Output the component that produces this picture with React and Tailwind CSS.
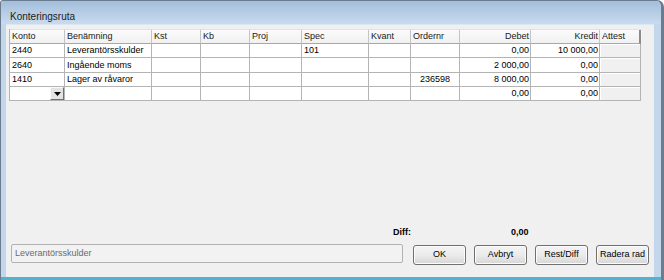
import React from 'react';

const COLS = [
  { name: 'Konto', w: 'w-[55px]' },
  { name: 'Benämning', w: 'w-[87px]' },
  { name: 'Kst', w: 'w-[49px]' },
  { name: 'Kb', w: 'w-[49px]' },
  { name: 'Proj', w: 'w-[52px]' },
  { name: 'Spec', w: 'w-[67px]' },
  { name: 'Kvant', w: 'w-[42px]' },
  { name: 'Ordernr', w: 'w-[49px]', center: true },
  { name: 'Debet', w: 'w-[71px]', right: true },
  { name: 'Kredit', w: 'w-[69px]', right: true },
  { name: 'Attest', w: 'w-[41px]', gray: true },
];

const ROWS = [
  ['2440', 'Leverantörsskulder', '', '', '', '101', '', '', '0,00', '10 000,00', ''],
  ['2640', 'Ingående moms', '', '', '', '', '', '', '2 000,00', '0,00', ''],
  ['1410', 'Lager av råvaror', '', '', '', '', '', '236598', '8 000,00', '0,00', ''],
  ['', '', '', '', '', '', '', '', '0,00', '0,00', ''],
];

const ROW_H = ['h-[14px]', 'h-[15px]', 'h-[14px]', 'h-[14px]'];

function Btn({ children }) {
  return (
    <div className="w-[53px] h-[20px] shrink-0 rounded-[3px] border border-[#707070] bg-gradient-to-b from-[#f4f4f4] via-[#ebebeb] to-[#d6d6d6] flex items-center justify-center text-[9px] text-black shadow-[inset_0_0_0_1px_#fcfcfc]">
      {children}
    </div>
  );
}

export default function App() {
  return (
    <div className="w-[664px] h-[280px] bg-white font-['Liberation_Sans',Arial,sans-serif]">
      <div className="w-[664px] h-[280px] flex flex-col rounded-tr-[7px] rounded-tl-[3px] border-l border-r-[3px] border-t border-[#6b7c8e] bg-[#c3d7ec] overflow-hidden">
        <div className="h-[23px] shrink-0 bg-gradient-to-b from-[#a3bedb] to-[#c9dbee] flex items-end pb-[2px] pl-[9px]">
          <span className="text-[10px] text-[#1b1b1b] leading-none">Konteringsruta</span>
        </div>
        <div className="flex-1 ml-[5px] mr-[7px] bg-[#f0f0f0] flex flex-col pt-[4px] pl-[3px] border-t border-[#dde7f1]">
          {/* grid */}
          <div className="flex flex-col border-l border-[#b4b4b4] w-[633px]">
            <div className="flex h-[15px] bg-gradient-to-b from-[#fbfbfb] to-[#f0f0f0] border-t border-[#e2e2e2]">
              {COLS.map((c, i) => (
                <div
                  key={c.name}
                  className={`${c.w} shrink-0 border-r border-b border-b-[#a8a8a8] ${i === COLS.length - 1 ? 'border-r-2 border-r-[#8a8a8a]' : 'border-r-[#c4c4c4]'} px-[2px] flex items-center ${c.right ? 'justify-end pr-[1px]' : ''} text-[9px] text-[#1a1a1a] leading-none`}
                >
                  {c.name}
                </div>
              ))}
            </div>
            {ROWS.map((r, ri) => (
              <div key={ri} className={`flex ${ROW_H[ri]}`}>
                {r.map((v, ci) => {
                  const c = COLS[ci];
                  const isDrop = ri === 3 && ci === 0;
                  return (
                    <div
                      key={ci}
                      className={`${c.w} shrink-0 border-r border-b border-[#b4b4b4] ${c.gray ? 'bg-[#f0f0f0] shadow-[inset_1px_1px_0_#ffffff]' : 'bg-white'} flex items-center ${c.right ? 'justify-end pr-[1px]' : c.center ? 'justify-center' : 'pl-[2px]'} text-[9px] text-black leading-none relative`}
                    >
                      {v}
                      {isDrop && (
                        <div className="absolute right-0 top-0 bottom-0 w-[14px] bg-[#e3e3e3] border border-t-[#fafafa] border-l-[#fafafa] border-r-[#6f6f6f] border-b-[#6f6f6f] flex items-center justify-center">
                          <svg width="7" height="4" viewBox="0 0 7 4">
                            <path d="M0 0 H7 L3.5 4 Z" fill="#000" />
                          </svg>
                        </div>
                      )}
                    </div>
                  );
                })}
              </div>
            ))}
          </div>

          <div className="flex-1" />

          {/* diff row */}
          <div className="flex items-center h-[10px] text-[9px] font-bold text-black leading-none">
            <span className="ml-[384px]">Diff:</span>
            <span className="ml-[100px]">0,00</span>
          </div>

          {/* bottom row */}
          <div className="flex items-start mt-[7px] mb-[12px] h-[21px]">
            <div className="w-[392px] h-[19px] shrink-0 ml-[2px] rounded-[2px] border border-[#b2b2b2] bg-[#f2f2f2] flex items-center pl-[3px] text-[9px] text-[#6a6a6a] leading-none">
              Leverantörsskulder
            </div>
            <div className="flex gap-[8px] ml-[10px] mt-[1px]">
              <Btn>OK</Btn>
              <Btn>Avbryt</Btn>
              <Btn>Rest/Diff</Btn>
              <Btn>Radera rad</Btn>
            </div>
          </div>
        </div>
        <div className="h-[3px] shrink-0 bg-[#56b0cf]" />
      </div>
    </div>
  );
}
